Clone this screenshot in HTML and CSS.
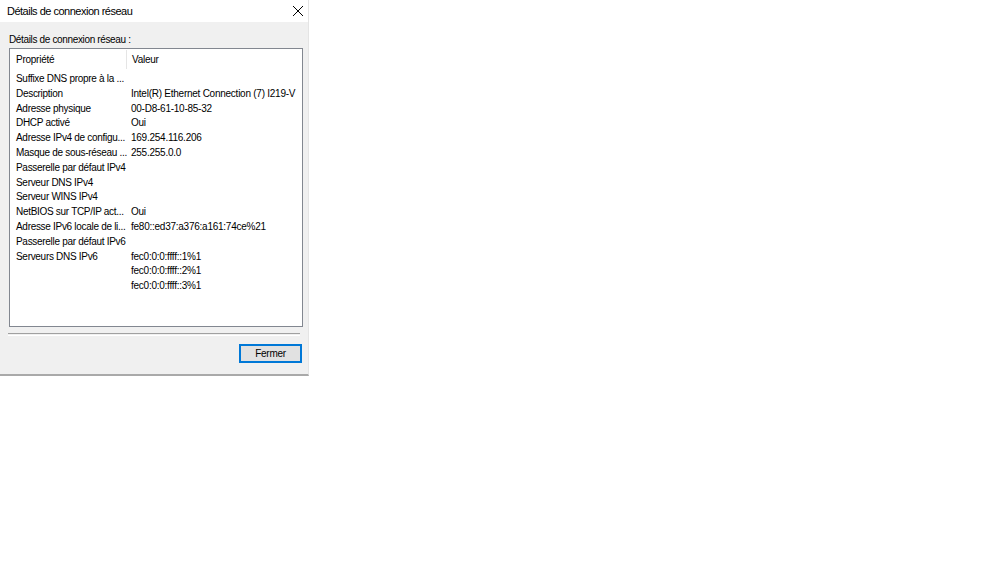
FILE: index.html
```html
<!DOCTYPE html>
<html lang="fr">
<head>
<meta charset="utf-8">
<title>Détails de connexion réseau</title>
<link rel="stylesheet" href="styles.css">
</head>
<body>
<div class="window">
  <div class="titlebar">
    <span class="title">Détails de connexion réseau</span>
    <span class="close"><svg width="12" height="12" viewBox="0 0 12 12"><path d="M1 1 L11 11 M11 1 L1 11" stroke="#000" stroke-width="1" fill="none"/></svg></span>
  </div>
  <div class="content">
    <div class="label">Détails de connexion réseau :</div>
    <div class="listview">
      <div class="lv-header">
        <div class="col1 hcell">Propriété</div>
        <div class="col2 hcell">Valeur</div>
      </div>
      <div class="rows">
        <div class="row"><div class="col1">Suffixe DNS propre à la ...</div><div class="col2"></div></div>
        <div class="row"><div class="col1">Description</div><div class="col2">Intel(R) Ethernet Connection (7) I219-V</div></div>
        <div class="row"><div class="col1">Adresse physique</div><div class="col2">00-D8-61-10-85-32</div></div>
        <div class="row"><div class="col1">DHCP activé</div><div class="col2">Oui</div></div>
        <div class="row"><div class="col1">Adresse IPv4 de configu...</div><div class="col2">169.254.116.206</div></div>
        <div class="row"><div class="col1">Masque de sous-réseau ...</div><div class="col2">255.255.0.0</div></div>
        <div class="row"><div class="col1">Passerelle par défaut IPv4</div><div class="col2"></div></div>
        <div class="row"><div class="col1">Serveur DNS IPv4</div><div class="col2"></div></div>
        <div class="row"><div class="col1">Serveur WINS IPv4</div><div class="col2"></div></div>
        <div class="row"><div class="col1">NetBIOS sur TCP/IP act...</div><div class="col2">Oui</div></div>
        <div class="row"><div class="col1">Adresse IPv6 locale de li...</div><div class="col2">fe80::ed37:a376:a161:74ce%21</div></div>
        <div class="row"><div class="col1">Passerelle par défaut IPv6</div><div class="col2"></div></div>
        <div class="row"><div class="col1">Serveurs DNS IPv6</div><div class="col2">fec0:0:0:ffff::1%1</div></div>
        <div class="row"><div class="col1"></div><div class="col2">fec0:0:0:ffff::2%1</div></div>
        <div class="row"><div class="col1"></div><div class="col2">fec0:0:0:ffff::3%1</div></div>
      </div>
    </div>
    <div class="separator"></div>
    <div class="footer">
      <button class="btn">Fermer</button>
    </div>
  </div>
</div>
</body>
</html>
```
FILE: styles.css
```css
html, body {
  margin: 0;
  padding: 0;
  background: #ffffff;
}
body {
  width: 999px;
  height: 562px;
  overflow: hidden;
  font-family: "Liberation Sans", Arial, sans-serif;
  color: #000;
}
.window {
  width: 309px;
  background: #f0f0f0;
  border-right: 1px solid #e4e4e4;
  border-bottom: 2px solid #a9a9a9;
  box-sizing: border-box;
}
.titlebar {
  height: 22px;
  background: #ffffff;
  display: flex;
  align-items: center;
  justify-content: space-between;
  padding-left: 7px;
  padding-right: 3px;
}
.title {
  font-size: 11px;
  letter-spacing: -0.5px;
}
.close {
  display: flex;
  width: 12px;
  height: 12px;
  margin-right: 1px;
}
.content {
  padding: 10px 0 0 9px;
  height: 352px;
  box-sizing: border-box;
}
.label {
  font-size: 10px;
  letter-spacing: -0.35px;
  height: 16px;
  line-height: 16px;
}
.listview {
  width: 294px;
  height: 279px;
  box-sizing: border-box;
  border: 1px solid #828790;
  background: #ffffff;
  font-size: 10px;
  letter-spacing: -0.25px;
}
.lv-header {
  display: flex;
  height: 21px;
  align-items: center;
}
.hcell {
  height: 19px;
  line-height: 19px;
}
.lv-header .col1 {
  border-right: 1px solid #e5e5e5;
}
.col1 {
  width: 110px;
  flex-shrink: 0;
  padding-left: 6px;
  white-space: nowrap;
}
.rows .col1 {
  letter-spacing: -0.3px;
}
.col2 {
  padding-left: 5px;
  white-space: nowrap;
}
.rows {
  padding-top: 2px;
}
.row {
  display: flex;
  height: 14.8px;
  line-height: 14.8px;
}
.separator {
  width: 292px;
  margin-top: 6px;
  height: 1px;
  border-top: 1px solid #a0a0a0;
  border-bottom: 1px solid #ffffff;
  margin-left: -1px;
}
.footer {
  display: flex;
  justify-content: flex-end;
  width: 293px;
  margin-top: 8px;
}
.btn {
  width: 63px;
  height: 19px;
  box-sizing: border-box;
  border: 1px solid #0078d7;
  box-shadow: inset 0 0 0 1px #0078d7;
  background: #e1e1e1;
  font-family: "Liberation Sans", Arial, sans-serif;
  font-size: 10px;
  letter-spacing: -0.25px;
  padding: 0;
  color: #000;
}
```
